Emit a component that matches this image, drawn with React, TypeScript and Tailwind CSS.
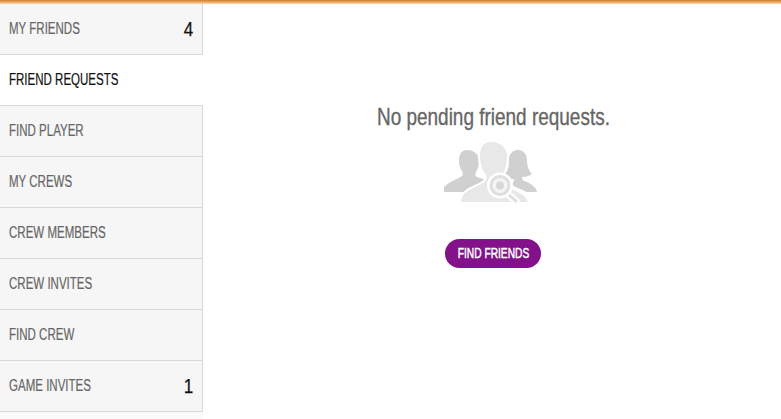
const items: { label: string; badge?: string; active?: boolean }[] = [
  { label: "MY FRIENDS", badge: "4" },
  { label: "FRIEND REQUESTS", active: true },
  { label: "FIND PLAYER" },
  { label: "MY CREWS" },
  { label: "CREW MEMBERS" },
  { label: "CREW INVITES" },
  { label: "FIND CREW" },
  { label: "GAME INVITES", badge: "1" },
];

function PeopleIcon() {
  return (
    <svg width="96" height="62" viewBox="0 0 96 62">
      <path fill="#d0d0d0" d="M23 9c-5 0-8 4-8 10 0 5 1 8 3 11 1 2 1 4 0 5-4 3-12 5-18 11v5h24l8-6 10-6-9-3c-2-1-2-3-1-5 2-3 3-7 3-11 0-7-5-11-12-11z" />
      <path fill="#d0d0d0" d="M74 9c-5 0-9 4-9 9 0 8-1 12-5 16 3 3 7 4 10 4 0 2 0 3-2 4l-3 1 18 8h10c-1-5-6-8-10-10-3-1-5-2-5-4 0-1 0-1 0-1 4 0 7-1 10-3-3-3-5-8-5-14 0-6-4-10-9-10z" />
      <path fill="#e8e8e8" stroke="#ffffff" strokeWidth="2" d="M47 0c-7 0-12 5-12 15 0 8 2 14 6 19 1 2 1 4-1 6-5 4-13 6-18 10-3 2-6 6-6 12h69c-1-6-5-9-9-11-6-3-13-6-17-10-2-2-1-4 0-6 3-5 5-12 5-20 0-9-7-15-17-15z" />
      <circle cx="56" cy="44.5" r="13" fill="#ffffff" />
      <circle cx="56" cy="44.5" r="9" fill="#f4f4f4" stroke="#dfdfdf" strokeWidth="3" />
      <circle cx="56" cy="44.5" r="4" fill="#d8d8d8" />
      <path d="M64 53l10 9" stroke="#ffffff" strokeWidth="7" />
      <path d="M65 54l8 7" stroke="#e0e0e0" strokeWidth="3" />
    </svg>
  );
}

export default function App() {
  return (
    <div className="w-[781px] h-[419px] overflow-hidden bg-white font-['Liberation_Sans',sans-serif]">
      <div className="h-[4px] bg-gradient-to-b from-[#c9802f] via-[#eaa661] to-[#fbdcb8]" />
      <div className="flex">
        <nav className="w-[203px] shrink-0">
          {items.map((it) => (
            <div
              key={it.label}
              className={
                it.active
                  ? "h-[51px] bg-white border-b border-[#d8d8d8] flex items-center pl-[9px] pr-[9px] text-[#111111]"
                  : "h-[51px] bg-[#f6f6f6] border-r border-b border-[#d8d8d8] flex items-center justify-between pl-[9px] pr-[9px] text-[#666666]"
              }
            >
              <span className="text-[16px] leading-none whitespace-nowrap origin-left scale-x-[0.72] [-webkit-text-stroke:0.2px]">{it.label}</span>
              {it.badge && <span className="text-[20px] leading-none text-[#111111] origin-right scale-x-[0.85] [-webkit-text-stroke:0.25px]">{it.badge}</span>}
            </div>
          ))}
          <div className="h-[8px] bg-[#fafafa]" />
        </nav>
        <main className="flex-1 flex flex-col items-center pl-[2px] pt-[99px]">
          <h1 className="text-[24px] leading-[27px] text-[#666666] whitespace-nowrap scale-x-[0.79] [-webkit-text-stroke:0.35px]">No pending friend requests.</h1>
          <div className="mt-[11px] -ml-[2px]"><PeopleIcon /></div>
          <button className="mt-[36px] w-[96px] h-[29px] rounded-full bg-[#82118a] text-white text-[15px] flex items-center justify-center">
            <span className="whitespace-nowrap scale-x-[0.68] [-webkit-text-stroke:0.5px]">FIND FRIENDS</span>
          </button>
        </main>
      </div>
    </div>
  );
}
